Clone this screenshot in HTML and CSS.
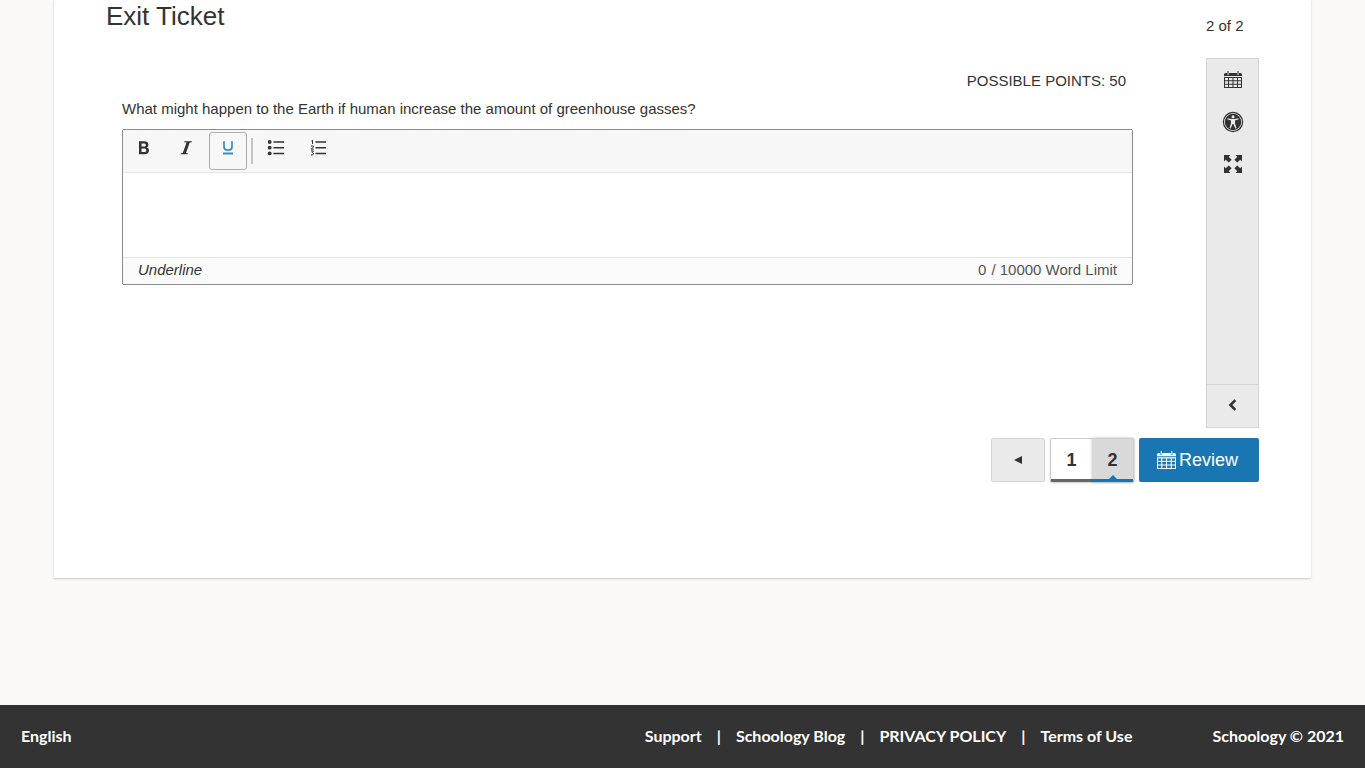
FILE: index.html
```
<!DOCTYPE html>
<html lang="en">
<head>
    <meta charset="UTF-8">
    <meta name="viewport" content="width=device-width, initial-scale=1.0">
    <title>Exit Ticket</title>
    <link rel="stylesheet" href="styles.css">
</head>
<body>
    <svg class="sprite" aria-hidden="true">
        <symbol id="calendar" viewBox="0 0 18 18">
            <path fill="currentColor" fill-rule="evenodd" d="M0 5V3.500Q0 2 1.500 2H3v1.500h2V2h8v1.500h2V2h1.500Q18 2 18 3.500V5ZM3.500 0h1v3h-1ZM13.500 0h1v3h-1ZM0 6H18V17H0ZM1 7v2.300h3V7ZM5 7v2.300h3.500V7ZM9.500 7v2.300H13V7ZM14 7v2.300h3V7ZM1 10.300v2.400h3v-2.400ZM5 10.300v2.400h3.500v-2.400ZM9.500 10.300v2.400H13v-2.400ZM14 10.300v2.400h3v-2.400ZM1 13.700V16h3v-2.300ZM5 13.700V16h3.500v-2.300ZM9.500 13.700V16H13v-2.300ZM14 13.700V16h3v-2.300Z"/>
        </symbol>
    </svg>

    <main class="assessment">
        <header class="heading">
            <h1>Exit Ticket</h1>
            <span class="counter">2 of 2</span>
        </header>

        <div class="workspace">
            <section class="question">
                <p class="points">POSSIBLE POINTS: 50</p>
                <label class="prompt" for="answer">What might happen to the Earth if human increase the amount of greenhouse gasses?</label>
                <div class="editor">
                    <div class="toolbar">
                        <button type="button" class="tool" aria-label="Bold">
                            <svg width="18" height="18" viewBox="0 0 18 18"><path fill="currentColor" fill-rule="evenodd" d="M4 2.300h5.200c2.800 0 4.200 1.300 4.200 3.400 0 1.300-.6 2.300-1.600 2.700 1.400.4 2.200 1.500 2.200 3 0 2.400-1.700 3.800-4.500 3.800H4ZM6.500 4.400v3h2.300c1.400 0 2-.5 2-1.500s-.6-1.500-2-1.500ZM6.500 9.500v3.600h2.600c1.500 0 2.200-.6 2.200-1.800s-.7-1.800-2.200-1.800Z"/></svg>
                        </button>
                        <button type="button" class="tool" aria-label="Italic">
                            <svg width="18" height="18" viewBox="0 0 18 18"><path fill="currentColor" d="M7.500 2.200H15l-.3 1-2 .4-3.700 10.300 1.800.3-.3 1H3.500l.3-1 2-.3L9.600 3.600l-2.400-.4Z"/></svg>
                        </button>
                        <button type="button" class="tool active" aria-label="Underline" aria-pressed="true">
                            <svg width="18" height="18" viewBox="0 0 18 18"><path fill="none" stroke="currentColor" stroke-width="1.800" d="M5 2.200V7.500q0 3.700 4 3.700t4-3.700V2.200M4 14.500h10"/></svg>
                        </button>
                        <span class="separator"></span>
                        <button type="button" class="tool" aria-label="Bulleted list">
                            <svg width="18" height="18" viewBox="0 0 18 18"><g fill="currentColor"><circle cx="2.700" cy="3" r="1.900"/><circle cx="2.700" cy="8.700" r="1.900"/><circle cx="2.700" cy="14.400" r="1.900"/></g><path stroke="currentColor" stroke-width="1.500" d="M6.500 3H17M6.500 8.700H17M6.500 14.400H17"/></svg>
                        </button>
                        <button type="button" class="tool" aria-label="Numbered list">
                            <svg width="18" height="18" viewBox="0 0 18 18"><path stroke="currentColor" stroke-width="1.500" d="M6.500 3H17M6.500 8.700H17M6.500 14.400H17"/><path fill="none" stroke="currentColor" stroke-width="1" d="M2.500 2 3.500 1.200V5M2 7h2.300v1.300L2.200 10.200h2.500M2 12h2.500l-1.200 1.500q1.500.3 1.200 1.500t-2.500 1"/></svg>
                        </button>
                    </div>
                    <textarea id="answer"></textarea>
                    <div class="status">
                        <em>Underline</em>
                        <span class="words"><span>0</span><span>/ 10000 Word Limit</span></span>
                    </div>
                </div>
            </section>

            <aside class="sidebar">
                <button type="button" aria-label="Review screen"><svg width="18" height="18"><use href="#calendar"/></svg></button>
                <button type="button" aria-label="Accessibility">
                    <svg width="22" height="22" viewBox="0 0 22 22"><circle cx="11" cy="11" r="9.600" fill="none" stroke="currentColor" stroke-width="1.200"/><circle cx="11" cy="11" r="8.200" fill="currentColor"/><circle cx="11" cy="5.700" r="1.500" fill="#eaeaea"/><path fill="#eaeaea" d="M5.500 7.300 9.500 8h3l4-.7.2 1-3.700 1.200v3l1.500 4.500-1.100.5L11.400 13h-.8l-2 4.500-1.100-.5L9 12.500v-3L5.300 8.300Z"/></svg>
                </button>
                <button type="button" aria-label="Full screen">
                    <svg width="18" height="18" viewBox="0 0 18 18"><path fill="currentColor" d="M0 0h6.500L4.700 1.800 7.600 4.800 4.800 7.600 1.800 4.700 0 6.500ZM18 0v6.500l-1.800-1.800-3 2.900-2.800-2.800 2.900-3L11.500 0ZM0 18v-6.500l1.800 1.800 3-2.900 2.800 2.800-2.900 3L6.500 18ZM18 18h-6.500l1.800-1.800-2.900-3 2.800-2.800 3 2.900 1.800-1.800Z"/></svg>
                </button>
                <button type="button" class="collapse" aria-label="Expand toolbar">
                    <svg width="12" height="12" viewBox="0 0 12 12"><path fill="none" stroke="currentColor" stroke-width="2.600" d="M8.300 1.200 3.500 6l4.800 4.800"/></svg>
                </button>
            </aside>
        </div>

        <nav class="pager">
            <button type="button" class="previous" aria-label="Previous"><svg width="8" height="8" viewBox="0 0 8 8"><path fill="currentColor" d="M8 0v8L0 4Z"/></svg></button>
            <div class="pages">
                <button type="button">1</button>
                <button type="button" class="current" aria-current="page">2</button>
            </div>
            <button type="button" class="review"><svg width="19" height="19"><use href="#calendar"/></svg>Review</button>
        </nav>
    </main>

    <footer>
        <a href="#" class="language">English</a>
        <div class="links">
            <a href="#">Support</a>
            <span>|</span>
            <a href="#">Schoology Blog</a>
            <span>|</span>
            <a href="#">PRIVACY POLICY</a>
            <span>|</span>
            <a href="#">Terms of Use</a>
        </div>
        <span>Schoology © 2021</span>
    </footer>
</body>
</html>
```
FILE: styles.css
```
* {
    box-sizing: border-box;
}

body {
    margin: 0;
    min-height: 100vh;
    display: flex;
    flex-direction: column;
    background: #faf9f7;
    color: #333;
    font-family: "Liberation Sans", Arial, sans-serif;
    font-size: 15px;
    line-height: 20px;
}

button {
    display: flex;
    align-items: center;
    justify-content: center;
    padding: 0;
    border: 0;
    background: none;
    color: inherit;
    font: inherit;
    cursor: pointer;
}

.sprite {
    display: none;
}

.assessment {
    margin: 0 54px;
    padding: 0 52px 96px;
    background: #fff;
    box-shadow: 0 1px 2px rgba(0, 0, 0, 0.2);
}

.heading {
    display: flex;
    justify-content: space-between;
    height: 58px;
}

.heading h1 {
    margin: 0;
    font-size: 26px;
    font-weight: normal;
    line-height: 32px;
}

.counter {
    width: 53px;
    padding-top: 16px;
}

.workspace {
    display: flex;
    min-height: 370px;
}

/* Question and answer */
.question {
    flex: 1;
    padding: 13px 73px 0 16px;
}

.points {
    margin: 0 7px 8px;
    text-align: right;
}

.prompt {
    display: block;
    margin-bottom: 10px;
}

.editor {
    border: 1px solid #8c8c8c;
    border-radius: 2px;
}

.toolbar {
    display: flex;
    align-items: center;
    gap: 4px;
    padding: 2px;
    border-bottom: 1px solid #e5e5e5;
    background: #f7f7f7;
}

.tool {
    width: 38px;
    height: 38px;
    padding-bottom: 6px;
    border: 1px solid transparent;
    border-radius: 3px;
}

.tool.active {
    border-color: #adadad;
    color: #3a8fc8;
}

.separator {
    width: 2px;
    height: 26px;
    background: #c4c4c4;
}

.editor textarea {
    display: block;
    width: 100%;
    height: 84px;
    padding: 12px 16px;
    border: 0;
    outline: 0;
    resize: none;
    color: inherit;
    font: inherit;
}

.status {
    display: flex;
    justify-content: space-between;
    padding: 2px 15px 4px;
    border-top: 1px solid #e5e5e5;
    background: #fafafa;
}

.words {
    display: flex;
    gap: 5px;
    color: #555;
}

/* Tools on the right */
.sidebar {
    display: flex;
    flex-direction: column;
    width: 53px;
    border: 1px solid #d4d4d4;
    background: #eaeaea;
}

.sidebar button {
    height: 42px;
}

.sidebar .collapse {
    height: 43px;
    margin-top: auto;
    padding-bottom: 2px;
    border-top: 1px solid #d4d4d4;
}

/* Pager */
.pager {
    display: flex;
    justify-content: flex-end;
    gap: 5px;
    height: 44px;
    margin-top: 10px;
}

.previous {
    width: 54px;
    border: 1px solid #d4d4d4;
    border-radius: 2px;
    background: #eaeaea;
}

.pages {
    display: flex;
    width: 84px;
    border-radius: 2px;
    box-shadow: 0 1px 2px rgba(0, 0, 0, 0.2);
    font-size: 18px;
    font-weight: bold;
}

.pages button {
    position: relative;
    flex: 1;
    padding-top: 2px;
    border: 1px solid #ccc;
    border-right: 0;
    border-bottom: 3px solid #666;
    border-radius: 2px 0 0 2px;
}

.pages .current {
    border: 1px solid #ccc;
    border-left: 0;
    border-bottom: 3px solid #1a76b2;
    border-radius: 0 2px 2px 0;
    background: #d9d9d9;
    box-shadow: 0 0 3px rgba(0, 0, 0, 0.25);
}

.current::after {
    content: "";
    position: absolute;
    bottom: 0;
    left: 50%;
    margin-left: -4px;
    border: 4px solid transparent;
    border-top: 0;
    border-bottom-color: #1a76b2;
}

.review {
    gap: 3px;
    width: 120px;
    padding-right: 3px;
    border-radius: 2px;
    background: #1a76b2;
    color: #fff;
    font-size: 18px;
}

/* Footer */
footer {
    display: flex;
    align-items: center;
    min-height: 63px;
    margin-top: auto;
    padding: 0 21px 2px;
    background: #333;
    color: #fff;
    font-family: Lato, sans-serif;
    font-size: 16px;
    font-weight: bold;
}

footer a {
    color: inherit;
    text-decoration: none;
}

.links {
    display: flex;
    gap: 15px;
    margin: 0 80px 0 auto;
}
```
